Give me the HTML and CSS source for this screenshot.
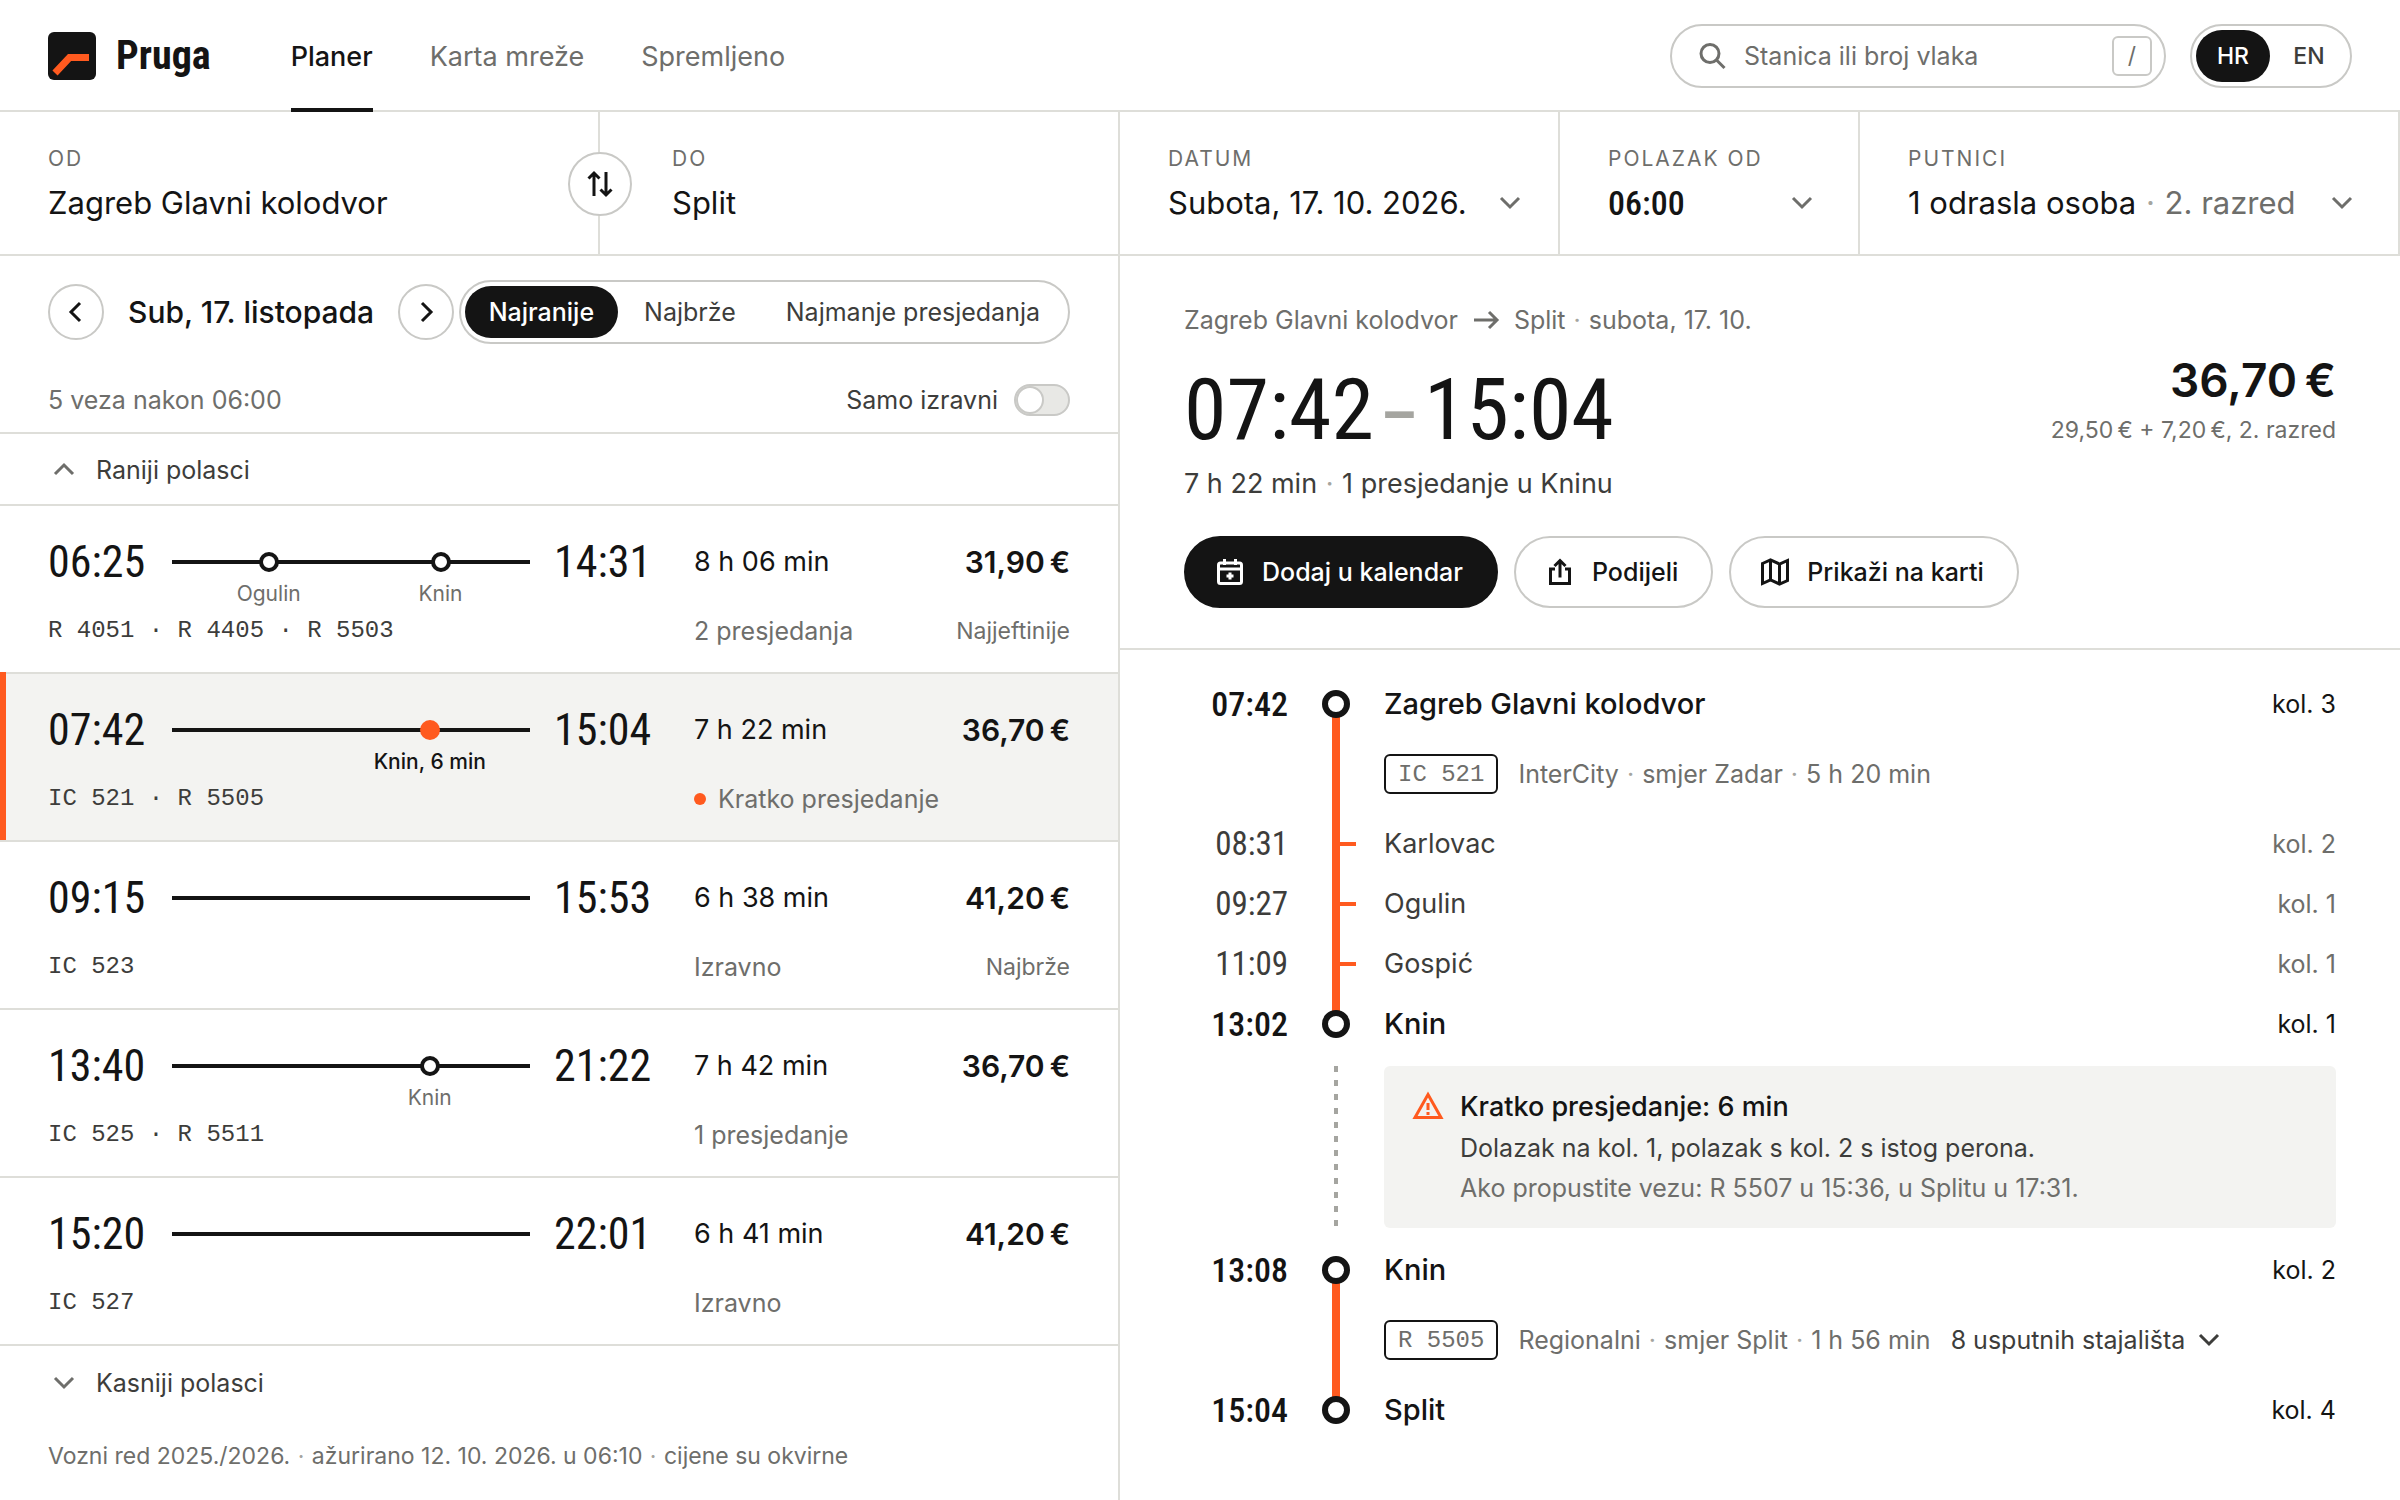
FILE: index.html
```html
<!DOCTYPE html>
<html lang="hr">
<head>
<meta charset="utf-8">
<meta name="viewport" content="width=device-width, initial-scale=1">
<title>Pruga – Planer</title>
<link rel="stylesheet" href="styles.css">
</head>
<body>
<svg class="sprite" aria-hidden="true">
  <symbol id="i-down" viewBox="0 0 32 32"><path d="M7 11l9 9 9-9"/></symbol>
  <symbol id="i-up" viewBox="0 0 32 32"><path d="M7 20l9-9 9 9"/></symbol>
  <symbol id="i-left" viewBox="0 0 32 32"><path d="M20 7l-9 9 9 9"/></symbol>
  <symbol id="i-right" viewBox="0 0 32 32"><path d="M12 7l9 9-9 9"/></symbol>
  <symbol id="i-arrow" viewBox="0 0 32 32"><path d="M4 16h23M19 8l8 8-8 8"/></symbol>
  <symbol id="i-search" viewBox="0 0 32 32"><circle cx="14" cy="13.5" r="9"/><path d="M20.5 20l8 8"/></symbol>
  <symbol id="i-swap" viewBox="0 0 32 32"><path d="M10 28V5M4.5 10.5L10 5l5.500 5.500M22 4v23M16.500 21.500L22 27l5.500-5.500"/></symbol>
  <symbol id="i-calendar" viewBox="0 0 32 32"><rect x="4.500" y="7" width="23" height="20.500" rx="2"/><path d="M4.500 13h23M10.500 3v6M21.500 3v6M16 16.500v7M12.500 20h7"/></symbol>
  <symbol id="i-share" viewBox="0 0 32 32"><path d="M11 13H6.500v14.500h19V13H21M16 21.500V4.500M10.500 10L16 4.500 21.500 10"/></symbol>
  <symbol id="i-map" viewBox="0 0 32 32"><path d="M3.500 7.500l8-3.500 9 4 8-3.500v20l-8 3.500-9-4-8 3.500zM11.500 4v20M20.500 8v20"/></symbol>
  <symbol id="i-warning" viewBox="0 0 32 32"><path d="M16 4.500L29 27.500H3z"/><path d="M16 13v7M16 22v3"/></symbol>
</svg>

<header class="topbar">
  <a class="brand" href="#">
    <svg class="brand-mark" viewBox="0 0 48 48" aria-hidden="true"><rect width="48" height="48" rx="6"/><path d="M7 41L21.500 25.500H41"/></svg>
    <span>Pruga</span>
  </a>
  <nav class="nav" aria-label="Glavna navigacija">
    <a class="nav-link is-current" href="#" aria-current="page">Planer</a>
    <a class="nav-link" href="#">Karta mreže</a>
    <a class="nav-link" href="#">Spremljeno</a>
  </nav>
  <label class="search">
    <svg class="icon"><use href="#i-search"/></svg>
    <input type="text" placeholder="Stanica ili broj vlaka" aria-label="Stanica ili broj vlaka">
    <kbd>/</kbd>
  </label>
  <div class="pill lang" role="group" aria-label="Jezik">
    <button class="pill-item is-active" type="button" aria-pressed="true">HR</button>
    <button class="pill-item" type="button" aria-pressed="false">EN</button>
  </div>
</header>

<form class="query">
  <div class="field field-from">
    <label for="from">Od</label>
    <input id="from" type="text" value="Zagreb Glavni kolodvor">
    <button class="round swap" type="button" aria-label="Zamijeni polazište i odredište"><svg class="icon"><use href="#i-swap"/></svg></button>
  </div>
  <div class="field field-to">
    <label for="to">Do</label>
    <input id="to" type="text" value="Split">
  </div>
  <div class="field field-date">
    <label for="date">Datum</label>
    <div class="control">
      <select id="date"><option>Subota, 17. 10. 2026.</option></select>
      <svg class="icon"><use href="#i-down"/></svg>
    </div>
  </div>
  <div class="field">
    <label for="time">Polazak od</label>
    <div class="control">
      <select id="time" class="condensed"><option>06:00</option></select>
      <svg class="icon"><use href="#i-down"/></svg>
    </div>
  </div>
  <div class="field">
    <label for="pax">Putnici</label>
    <button id="pax" class="control" type="button" aria-haspopup="dialog">
      <span>1 odrasla osoba <span class="muted"><i class="sep">·</i> 2. razred</span></span>
      <svg class="icon"><use href="#i-down"/></svg>
    </button>
  </div>
</form>

<main class="layout">
  <section class="results" aria-label="Veze">
    <div class="toolbar">
      <div class="toolbar-row">
        <div class="day">
          <button class="round" type="button" aria-label="Prethodni dan"><svg class="icon"><use href="#i-left"/></svg></button>
          <h2>Sub, 17. listopada</h2>
          <button class="round" type="button" aria-label="Sljedeći dan"><svg class="icon"><use href="#i-right"/></svg></button>
        </div>
        <div class="pill sort" role="group" aria-label="Poredak">
          <button class="pill-item is-active" type="button" aria-pressed="true">Najranije</button>
          <button class="pill-item" type="button" aria-pressed="false">Najbrže</button>
          <button class="pill-item" type="button" aria-pressed="false">Najmanje presjedanja</button>
        </div>
      </div>
      <div class="toolbar-row">
        <span class="muted">5 veza nakon 06:00</span>
        <label class="switch">Samo izravni <input type="checkbox" role="switch"></label>
      </div>
    </div>

    <button class="more more-earlier" type="button"><svg class="icon"><use href="#i-up"/></svg>Raniji polasci</button>

    <ol class="trips">
      <li><a class="trip" href="#">
        <time class="condensed">06:25</time>
        <span class="track">
          <span class="stop" style="left:27%"><span>Ogulin</span></span>
          <span class="stop" style="left:75%"><span>Knin</span></span>
        </span>
        <time class="condensed">14:31</time>
        <span class="duration">8 h 06 min</span>
        <span class="price">31,90&#8239;€</span>
        <span class="codes">R 4051 · R 4405 · R 5503</span>
        <span class="note">2 presjedanja</span>
        <span class="tag">Najjeftinije</span>
      </a></li>
      <li><a class="trip is-selected" href="#" aria-current="true">
        <time class="condensed">07:42</time>
        <span class="track">
          <span class="stop is-tight" style="left:72%"><span>Knin, 6 min</span></span>
        </span>
        <time class="condensed">15:04</time>
        <span class="duration">7 h 22 min</span>
        <span class="price">36,70&#8239;€</span>
        <span class="codes">IC 521 · R 5505</span>
        <span class="note note-tight">Kratko presjedanje</span>
      </a></li>
      <li><a class="trip" href="#">
        <time class="condensed">09:15</time>
        <span class="track"></span>
        <time class="condensed">15:53</time>
        <span class="duration">6 h 38 min</span>
        <span class="price">41,20&#8239;€</span>
        <span class="codes">IC 523</span>
        <span class="note">Izravno</span>
        <span class="tag">Najbrže</span>
      </a></li>
      <li><a class="trip" href="#">
        <time class="condensed">13:40</time>
        <span class="track">
          <span class="stop" style="left:72%"><span>Knin</span></span>
        </span>
        <time class="condensed">21:22</time>
        <span class="duration">7 h 42 min</span>
        <span class="price">36,70&#8239;€</span>
        <span class="codes">IC 525 · R 5511</span>
        <span class="note">1 presjedanje</span>
      </a></li>
      <li><a class="trip" href="#">
        <time class="condensed">15:20</time>
        <span class="track"></span>
        <time class="condensed">22:01</time>
        <span class="duration">6 h 41 min</span>
        <span class="price">41,20&#8239;€</span>
        <span class="codes">IC 527</span>
        <span class="note">Izravno</span>
      </a></li>
    </ol>

    <button class="more" type="button"><svg class="icon"><use href="#i-down"/></svg>Kasniji polasci</button>
    <p class="footnote">Vozni red 2025./2026. <i class="sep">·</i> ažurirano 12. 10. 2026. u 06:10 <i class="sep">·</i> cijene su okvirne</p>
  </section>

  <section class="detail" aria-label="Odabrana veza">
    <div class="summary">
      <p class="route">Zagreb Glavni kolodvor <svg class="icon"><use href="#i-arrow"/></svg> <span>Split <i class="sep">·</i> subota, 17. 10.</span></p>
      <div class="headline">
        <h1 class="condensed">07:42<span class="dash">–</span>15:04</h1>
        <div class="fare">
          <strong>36,70&#8239;€</strong>
          <span>29,50&#8239;€ + 7,20&#8239;€, 2. razred</span>
        </div>
      </div>
      <p class="meta">7 h 22 min <i class="sep">·</i> 1 presjedanje u Kninu</p>
      <div class="actions">
        <button class="btn btn-primary" type="button"><svg class="icon"><use href="#i-calendar"/></svg>Dodaj u kalendar</button>
        <button class="btn" type="button"><svg class="icon"><use href="#i-share"/></svg>Podijeli</button>
        <button class="btn" type="button"><svg class="icon"><use href="#i-map"/></svg>Prikaži na karti</button>
      </div>
    </div>

    <ol class="timeline">
      <li class="leg leg-start">
        <time class="condensed">07:42</time><span class="rail"></span>
        <span class="station">Zagreb Glavni kolodvor</span><span class="platform">kol. 3</span>
      </li>
      <li class="leg leg-service">
        <span class="rail"></span>
        <span class="service"><span class="chip">IC 521</span><span>InterCity <i class="sep">·</i> smjer Zadar <i class="sep">·</i> 5 h 20 min</span></span>
      </li>
      <li class="leg leg-via">
        <time class="condensed">08:31</time><span class="rail"></span>
        <span class="station">Karlovac</span><span class="platform">kol. 2</span>
      </li>
      <li class="leg leg-via">
        <time class="condensed">09:27</time><span class="rail"></span>
        <span class="station">Ogulin</span><span class="platform">kol. 1</span>
      </li>
      <li class="leg leg-via">
        <time class="condensed">11:09</time><span class="rail"></span>
        <span class="station">Gospić</span><span class="platform">kol. 1</span>
      </li>
      <li class="leg leg-end">
        <time class="condensed">13:02</time><span class="rail"></span>
        <span class="station">Knin</span><span class="platform">kol. 1</span>
      </li>
      <li class="leg leg-transfer">
        <span class="rail"></span>
        <div class="alert">
          <svg class="icon"><use href="#i-warning"/></svg>
          <div>
            <strong>Kratko presjedanje: 6 min</strong>
            <p>Dolazak na kol. 1, polazak s kol. 2 s istog perona.</p>
            <p class="muted">Ako propustite vezu: R 5507 u 15:36, u Splitu u 17:31.</p>
          </div>
        </div>
      </li>
      <li class="leg leg-start">
        <time class="condensed">13:08</time><span class="rail"></span>
        <span class="station">Knin</span><span class="platform">kol. 2</span>
      </li>
      <li class="leg leg-service">
        <span class="rail"></span>
        <span class="service"><span class="chip">R 5505</span><span>Regionalni <i class="sep">·</i> smjer Split <i class="sep">·</i> 1 h 56 min</span>
          <button class="expand" type="button" aria-expanded="false">8 usputnih stajališta<svg class="icon"><use href="#i-down"/></svg></button></span>
      </li>
      <li class="leg leg-end">
        <time class="condensed">15:04</time><span class="rail"></span>
        <span class="station">Split</span><span class="platform">kol. 4</span>
      </li>
    </ol>
  </section>
</main>
</body>
</html>
```
FILE: styles.css
```css
:root {
  --ink: #141414;
  --ink-2: #3d3d3b;
  --muted: #6e6e6b;
  --faint: #a5a5a0;
  --line: #deded9;
  --edge: #c9c9c6;
  --wash: #f3f3f1;
  --accent: #ff5a1f;
  --sans: Inter, "Liberation Sans", Arial, sans-serif;
  --narrow: "Liberation Sans Narrow", "Arial Narrow", "Roboto Condensed", "Liberation Sans", sans-serif;
  --mono: "Liberation Mono", "Courier New", monospace;
  --xs: 21px;
  --s: 23px;
  --m: 25px;
  --l: 27px;
  --xl: 30px;
}

*, ::before, ::after { box-sizing: border-box; }

body {
  margin: 0;
  min-height: 100vh;
  display: flex;
  flex-direction: column;
  background: #fff;
  color: var(--ink);
  font: 400 var(--m)/40px var(--sans);
}

h1, h2, p, ol { margin: 0; padding: 0; }
ol { list-style: none; }
a { color: inherit; text-decoration: none; }
button, input, select {
  margin: 0;
  padding: 0;
  border: 0;
  background: none;
  color: inherit;
  font: inherit;
}
button, select { cursor: pointer; }

.sprite { position: absolute; width: 0; height: 0; }
.icon {
  width: 32px;
  height: 32px;
  flex: none;
  fill: none;
  stroke: currentColor;
  stroke-width: 3;
}
.muted { color: var(--muted); }
.sep { margin: 0 1px; color: var(--faint); font-style: normal; }
.condensed { font-family: var(--narrow); }

/* Top bar */
.topbar {
  display: flex;
  align-items: center;
  height: 112px;
  padding: 2px 48px 0;
  border-bottom: 2px solid var(--line);
}
.brand {
  display: flex;
  align-items: center;
  gap: 20px;
  margin-right: 80px;
  font: 700 40px/48px var(--narrow);
}
.brand-mark { width: 48px; height: 48px; fill: var(--ink); }
.brand-mark path { fill: none; stroke: var(--accent); stroke-width: 7; }
.nav { display: flex; gap: 57px; margin-right: auto; align-self: stretch; }
.nav-link {
  display: flex;
  align-items: center;
  height: 110px;
  padding-top: 4px;
  border-bottom: 4px solid transparent;
  color: var(--muted);
  font-size: var(--l);
}
.nav-link.is-current { color: var(--ink); border-color: var(--ink); font-weight: 500; }
.search {
  display: flex;
  align-items: center;
  gap: 16px;
  width: 496px;
  height: 64px;
  padding: 0 12px 0 24px;
  border: 2px solid var(--edge);
  border-radius: 32px;
  color: var(--muted);
}
.search input { flex: 1; min-width: 0; }
.search input::placeholder { color: var(--muted); opacity: 1; }
.search kbd {
  width: 40px;
  height: 40px;
  border: 2px solid var(--edge);
  border-radius: 6px;
  font: var(--s)/36px var(--sans);
  text-align: center;
}
.pill {
  display: flex;
  gap: 2px;
  height: 64px;
  padding: 4px;
  border: 2px solid var(--edge);
  border-radius: 32px;
}
.pill-item {
  padding: 0 24px;
  border-radius: 26px;
  color: var(--ink-2);
  white-space: nowrap;
}
.pill-item.is-active { background: var(--ink); color: #fff; font-weight: 500; }
.lang { margin-left: 24px; }
.lang .pill-item { width: 74px; padding: 0; font-size: var(--s); font-weight: 500; }

/* Journey query */
.query {
  display: grid;
  grid-template-columns: 30fr 26fr 22fr 15fr 27fr;
  border-bottom: 2px solid var(--line);
}
.field {
  position: relative;
  display: flex;
  flex-direction: column;
  gap: 7px;
  min-width: 0;
  height: 142px;
  padding: 30px 40px 0 48px;
  border-right: 2px solid var(--line);
  font-size: 31px;
}
.field label {
  color: var(--muted);
  font-size: var(--xs);
  line-height: 34px;
  letter-spacing: 2px;
  text-transform: uppercase;
}
.field input, .field select { width: 100%; height: 40px; }
.field select { appearance: none; }
.field select.condensed { font-size: 34px; font-weight: 500; }
.field-to { padding-left: 72px; }
.field-date { padding-right: 32px; }
.control {
  display: flex;
  align-items: center;
  justify-content: space-between;
  height: 40px;
  white-space: nowrap;
}
.control .icon { color: var(--muted); }
.round {
  display: grid;
  place-items: center;
  width: 56px;
  height: 56px;
  border: 2px solid var(--edge);
  border-radius: 50%;
  background: #fff;
}
.swap {
  position: absolute;
  top: 40px;
  right: -34px;
  z-index: 1;
  width: 64px;
  height: 64px;
}

/* Two panes */
.layout {
  display: grid;
  grid-template-columns: 7fr 8fr;
  flex: 1;
}
.results { min-width: 0; border-right: 2px solid var(--line); }

.toolbar {
  display: flex;
  flex-direction: column;
  gap: 40px;
  padding: 24px 48px 16px;
  border-bottom: 2px solid var(--line);
}
.toolbar-row { display: flex; align-items: center; justify-content: space-between; }
.toolbar-row:last-child { height: 32px; }
.day { display: flex; align-items: center; gap: 24px; }
.day h2 { font-size: var(--xl); font-weight: 500; white-space: nowrap; }
.switch { display: flex; align-items: center; gap: 16px; color: var(--ink-2); }
.switch input {
  appearance: none;
  width: 56px;
  height: 32px;
  border: 2px solid var(--edge);
  border-radius: 16px;
  background: #e8e8e5;
}
.switch input::before {
  content: "";
  display: block;
  width: 28px;
  height: 28px;
  border: 2px solid var(--edge);
  border-radius: 50%;
  background: #fff;
}
.switch input:checked::before { margin-left: auto; }

.more {
  display: flex;
  align-items: center;
  gap: 16px;
  width: 100%;
  height: 74px;
  padding: 0 48px;
  color: var(--ink-2);
}
.more .icon { color: var(--muted); }
.more-earlier { height: 72px; padding-top: 2px; border-bottom: 2px solid var(--line); }

.trip {
  position: relative;
  display: grid;
  grid-template-columns: 100px minmax(0, 1fr) 116px 236px 116px;
  grid-auto-rows: 40px;
  gap: 29px 24px;
  padding: 36px 48px 21px;
  border-bottom: 2px solid var(--line);
  white-space: nowrap;
}
.trip time { font-size: 44px; font-weight: 450; }
.trip.is-selected { background: var(--wash); }
.trip.is-selected::before {
  content: "";
  position: absolute;
  inset: -2px auto 0 0;
  width: 6px;
  background: var(--accent);
}
.track { position: relative; align-self: center; height: 4px; background: var(--ink); }
.stop {
  position: absolute;
  top: -8px;
  display: flex;
  flex-direction: column;
  align-items: center;
  width: 0;
  color: var(--muted);
  font-size: var(--xs);
  line-height: 44px;
}
.stop::before {
  content: "";
  flex: none;
  width: 20px;
  height: 20px;
  border: 4px solid var(--ink);
  border-radius: 50%;
  background: #fff;
}
.stop.is-tight { color: var(--ink); font-weight: 500; }
.stop.is-tight::before { border-color: var(--accent); background: var(--accent); }
.duration { font-size: var(--l); }
.price { font-size: var(--xl); font-weight: 600; text-align: right; }
.codes { grid-column: 1 / 4; color: var(--ink-2); font: 24px/40px var(--mono); }
.note { color: var(--muted); }
.note-tight { display: flex; align-items: center; gap: 12px; }
.note-tight::before {
  content: "";
  flex: none;
  width: 12px;
  height: 12px;
  border-radius: 50%;
  background: var(--accent);
}
.tag { color: var(--muted); font-size: var(--s); text-align: right; }
.footnote { padding: 16px 48px; color: var(--muted); font-size: var(--s); }

/* Selected connection */
.detail { min-width: 0; }
.summary { padding: 44px 64px 40px; border-bottom: 2px solid var(--line); }
.route { display: flex; align-items: center; gap: 12px; color: var(--muted); }
.headline { display: flex; justify-content: space-between; height: 124px; }
.headline h1 { font-size: 86px; font-weight: 450; line-height: 140px; }
.headline .dash { margin: 0 6px; color: var(--faint); font-size: 68px; font-weight: 500; }
.fare { display: flex; flex-direction: column; padding-top: 8px; text-align: right; }
.fare strong { font-size: 46px; font-weight: 600; line-height: 64px; }
.fare span { color: var(--muted); font-size: var(--s); line-height: 36px; }
.meta { color: var(--ink-2); font-size: var(--l); }
.actions { display: flex; gap: 16px; margin-top: 32px; }
.btn {
  display: flex;
  align-items: center;
  gap: 16px;
  height: 72px;
  padding: 0 33px 0 28px;
  border: 2px solid var(--edge);
  border-radius: 36px;
  font-size: var(--m);
  font-weight: 500;
}
.btn-primary { border-color: var(--ink); background: var(--ink); color: #fff; }

.timeline { padding: 24px 64px; }
.leg {
  display: grid;
  grid-template-columns: 104px 96px minmax(0, 1fr) auto;
  align-items: center;
  min-height: 60px;
}
.leg time { grid-column: 1; font-size: 34px; font-weight: 500; text-align: right; }
.rail {
  grid-column: 2;
  align-self: stretch;
  display: grid;
  place-items: center;
  background: linear-gradient(var(--accent), var(--accent)) center / 8px 100% no-repeat;
}
.leg-start .rail { background-size: 8px 50%; background-position: center bottom; }
.leg-end .rail { background-size: 8px 50%; background-position: center top; }
.leg-start .rail::before, .leg-end .rail::before {
  content: "";
  width: 28px;
  height: 28px;
  border: 6px solid var(--ink);
  border-radius: 50%;
  background: #fff;
}
.station { font-size: 29px; font-weight: 500; }
.leg-via { color: var(--ink-2); }
.leg-via time { font-size: 33px; font-weight: 400; }
.leg-via .station { font-size: var(--l); font-weight: 400; }
.leg-via .platform { color: var(--muted); }
.leg-via .rail::before {
  content: "";
  width: 16px;
  height: 4px;
  margin-left: 24px;
  background: var(--accent);
}
.leg-service { min-height: 80px; color: var(--muted); }
.service { display: flex; align-items: center; gap: 20px; white-space: nowrap; }
.chip {
  height: 40px;
  padding: 0 12px;
  border: 2px solid var(--ink);
  border-radius: 6px;
  font: 24px/38px var(--mono);
}
.expand { display: flex; align-items: center; gap: 8px; color: var(--ink-2); }
.leg-transfer { margin: 12px 0; }
.leg-transfer .rail {
  background: repeating-linear-gradient(var(--faint) 0 6px, transparent 6px 14px) center / 4px 100% no-repeat;
}
.alert {
  grid-column: 3 / 5;
  display: flex;
  gap: 16px;
  padding: 20px 28px;
  border-radius: 6px;
  background: var(--wash);
  color: var(--ink-2);
}
.alert .icon { margin-top: 4px; color: var(--accent); }
.alert strong { display: block; color: var(--ink); font-size: var(--l); font-weight: 500; line-height: 42px; }
```
